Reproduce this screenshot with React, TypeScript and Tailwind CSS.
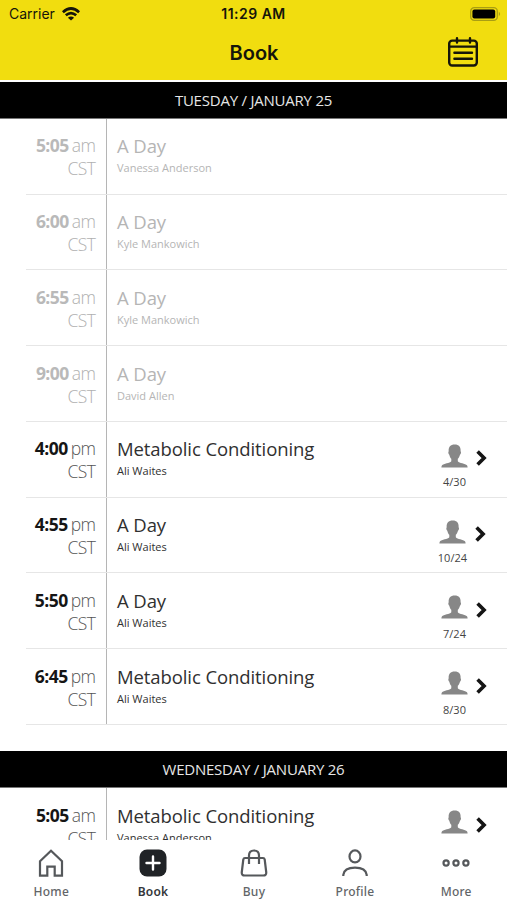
interface ClassItem {
  time: string;
  period: "am" | "pm";
  name: string;
  coach: string;
  spots?: string;
  past?: boolean;
}

const tuesday: ClassItem[] = [
  { time: "5:05", period: "am", name: "A Day", coach: "Vanessa Anderson", past: true },
  { time: "6:00", period: "am", name: "A Day", coach: "Kyle Mankowich", past: true },
  { time: "6:55", period: "am", name: "A Day", coach: "Kyle Mankowich", past: true },
  { time: "9:00", period: "am", name: "A Day", coach: "David Allen", past: true },
  { time: "4:00", period: "pm", name: "Metabolic Conditioning", coach: "Ali Waites", spots: "4/30" },
  { time: "4:55", period: "pm", name: "A Day", coach: "Ali Waites", spots: "10/24" },
  { time: "5:50", period: "pm", name: "A Day", coach: "Ali Waites", spots: "7/24" },
  { time: "6:45", period: "pm", name: "Metabolic Conditioning", coach: "Ali Waites", spots: "8/30" },
];

const wednesday: ClassItem[] = [
  { time: "5:05", period: "am", name: "Metabolic Conditioning", coach: "Vanessa Anderson", spots: "" },
];

function WifiIcon() {
  return (
    <svg width="18" height="14" viewBox="0 0 18 14" fill="none" stroke="#15150a" strokeWidth="2.7">
      <path d="M0.9 5.2 Q9 -2.2 17.1 5.2" />
      <path d="M3.8 8.3 Q9 3.8 14.2 8.3" />
      <path d="M9 13.6 L5.9 10.7 Q9 8.4 12.1 10.7 Z" fill="#15150a" stroke="none" />
    </svg>
  );
}

function BatteryIcon() {
  return (
    <svg width="31" height="14" viewBox="0 0 31 14" fill="none">
      <rect x="0.7" y="0.7" width="26.6" height="12.6" rx="3.6" stroke="#a99e13" strokeWidth="1.3" />
      <rect x="2.4" y="2.4" width="22.8" height="9.2" rx="2" fill="#000" />
      <path d="M28.8 4.8 Q31.4 7 28.8 9.2 Z" fill="#a99e13" />
    </svg>
  );
}

function CalendarIcon() {
  return (
    <svg width="30" height="30" viewBox="0 0 30 30" fill="none" stroke="#15150a" strokeWidth="2.4" strokeLinecap="round">
      <rect x="1.2" y="3.6" width="27.6" height="24.9" rx="3" />
      <path d="M1.2 9.6H28.8M9 1.2V5.6M22 1.2V5.6M6.4 15.7H24M6.4 21.7H24" />
    </svg>
  );
}

function PersonIcon() {
  return (
    <svg width="27" height="24" viewBox="0 0 27 24" fill="#878787">
      <path d="M13.7 0.4C17.9 0.4 20 3 19.6 7.2C20.4 7.7 20 10 19 10.7C18.5 12.7 17.6 14 16.8 14.8V17.2C18.2 19.2 24.4 19.4 26 21.2C26.5 22 26.6 22.8 26.6 23.6H0.4C0.4 22.8 0.5 22 1 21.2C2.6 19.4 8.9 19.2 10.3 17.2V14.8C9.5 14 8.7 12.7 8.3 10.7C7.3 10 7 7.7 7.7 7.2C7.3 3 9.5 0.4 13.7 0.4Z" />
    </svg>
  );
}

function ChevronIcon() {
  return (
    <svg width="11" height="16" viewBox="0 0 11 16" fill="none" stroke="#151515" strokeWidth="3.6">
      <path d="M1.6 1.5L8.1 8L1.6 14.5" />
    </svg>
  );
}

function DateBar({ label }: { label: string }) {
  return (
    <div className="flex h-[36.75px] shrink-0 items-center justify-center border-b border-[#777] bg-black pt-px text-[15px] tracking-[-0.015em] text-[#e6e6e6]">
      {label}
    </div>
  );
}

function ClassRow({ item }: { item: ClassItem }) {
  const past = item.past;
  return (
    <div className="ml-[26px] flex h-[75.75px] shrink-0 border-b border-[#e6e6e6]">
      <div className="w-[81px] shrink-0 border-r border-[#b5b5b5] pt-[15.5px] pr-[10.5px] text-right text-[17.5px] leading-[23px] tracking-[-0.03em]">
        <div className="whitespace-nowrap">
          <span className={`font-bold ${past ? "text-[#b9b9b9]" : "text-[#151515]"}`}>{item.time}</span>
          <span className={`ml-[3px] font-light ${past ? "text-[#b0b0b0]" : "text-[#555]"}`}>{item.period}</span>
        </div>
        <div className={`font-light ${past ? "text-[#b0b0b0]" : "text-[#555]"}`}>CST</div>
      </div>
      <div className={`flex-1 pt-[15.5px] pl-[10px] ${past ? "text-[#b5b5b5]" : "text-[#303030]"}`}>
        <div className="text-[18.5px] leading-[23px] tracking-[-0.005em]">{item.name}</div>
        <div className="text-[11px] leading-[21px]">{item.coach}</div>
      </div>
      {item.spots !== undefined && (
        <div className={`flex gap-2 pt-[22px] ${item.spots.length > 4 ? "pr-[21px]" : "pr-[20px]"}`}>
          <div className="flex flex-col items-center">
            <PersonIcon />
            <div className="mt-[6.5px] text-[11px] leading-[16px] text-[#444]">{item.spots}</div>
          </div>
          <div className="pt-[6.5px]">
            <ChevronIcon />
          </div>
        </div>
      )}
    </div>
  );
}

const tabs = [
  {
    label: "Home",
    icon: <path d="M3 12.2L14 1.8L25 12.2V26.6H17.7V17.6H10.3V26.6H3Z" />,
  },
  {
    label: "Book",
    active: true,
    icon: (
      <>
        <rect x="0.5" y="0.5" width="27" height="27" rx="7.5" fill="#202326" stroke="none" />
        <path d="M14 7.5V20.5M7.5 14H20.5" stroke="#fff" strokeWidth="2.4" strokeLinecap="round" />
      </>
    ),
  },
  {
    label: "Buy",
    icon: (
      <>
        <path d="M5 9H23C24 9 24.5 9.6 24.7 10.5L26.2 23C26.5 25.4 25.3 26.5 23.3 26.5H4.7C2.7 26.5 1.5 25.4 1.8 23L3.3 10.5C3.5 9.6 4 9 5 9Z" />
        <path d="M9 15V6.5C9 3.3 11 1.5 14 1.5S19 3.3 19 6.5V15" />
      </>
    ),
  },
  {
    label: "Profile",
    icon: (
      <>
        <ellipse cx="14" cy="7.4" rx="5.5" ry="6" />
        <path d="M2.3 27V25.8C3 21 8 18.7 14 18.7S25 21 25.7 25.8V27" />
      </>
    ),
  },
  {
    label: "More",
    icon: (
      <>
        <circle cx="4.1" cy="14" r="2.6" />
        <circle cx="14" cy="14" r="2.6" />
        <circle cx="23.9" cy="14" r="2.6" />
      </>
    ),
  },
];

function TabBar() {
  return (
    <nav className="grid h-[60px] shrink-0 grid-cols-[102.5px_101px_101px_101px_101.5px] bg-white pt-[9px] font-['Noto_Sans','Open_Sans',sans-serif]">
      {tabs.map((tab) => (
        <div key={tab.label} className="flex flex-col items-center">
          <svg width="28" height="28" viewBox="0 0 28 28" fill="none" stroke="#55585b" strokeWidth="2.2">
            {tab.icon}
          </svg>
          <span
            className={`mt-[5.5px] text-[12px] leading-[18px] tracking-[0.02em] ${
              tab.active ? "font-semibold text-[#34373a]" : "font-medium text-[#626568]"
            }`}
          >
            {tab.label}
          </span>
        </div>
      ))}
    </nav>
  );
}

export default function App() {
  return (
    <div className="flex h-[900px] w-[507px] flex-col overflow-hidden bg-white font-['Open_Sans',sans-serif]">
      <header className="h-[79.5px] shrink-0 bg-[#f1dd0f] font-['Inter',sans-serif] text-[#15150a]">
        <div className="grid h-[27px] grid-cols-3 items-center pr-[6px] pl-[9px] text-[14px]">
          <div className="flex items-center gap-[7px]">
            <span>Carrier</span>
            <WifiIcon />
          </div>
          <div className="pr-[3px] text-center font-semibold tracking-[0.035em]">11:29 AM</div>
          <div className="flex justify-end">
            <BatteryIcon />
          </div>
        </div>
        <div className="grid h-[50px] grid-cols-3 items-center pr-[29px]">
          <div />
          <h1 className="pt-px pl-[30px] text-center text-[20px] font-semibold">Book</h1>
          <div className="flex justify-end">
            <CalendarIcon />
          </div>
        </div>
      </header>
      <main className="flex min-h-0 flex-1 flex-col overflow-hidden pt-[2.5px]">
        <DateBar label="TUESDAY / JANUARY 25" />
        {tuesday.map((item) => (
          <ClassRow key={item.time} item={item} />
        ))}
        <div className="h-[26.5px] shrink-0" />
        <DateBar label="WEDNESDAY / JANUARY 26" />
        {wednesday.map((item) => (
          <ClassRow key={item.time} item={item} />
        ))}
      </main>
      <TabBar />
    </div>
  );
}
